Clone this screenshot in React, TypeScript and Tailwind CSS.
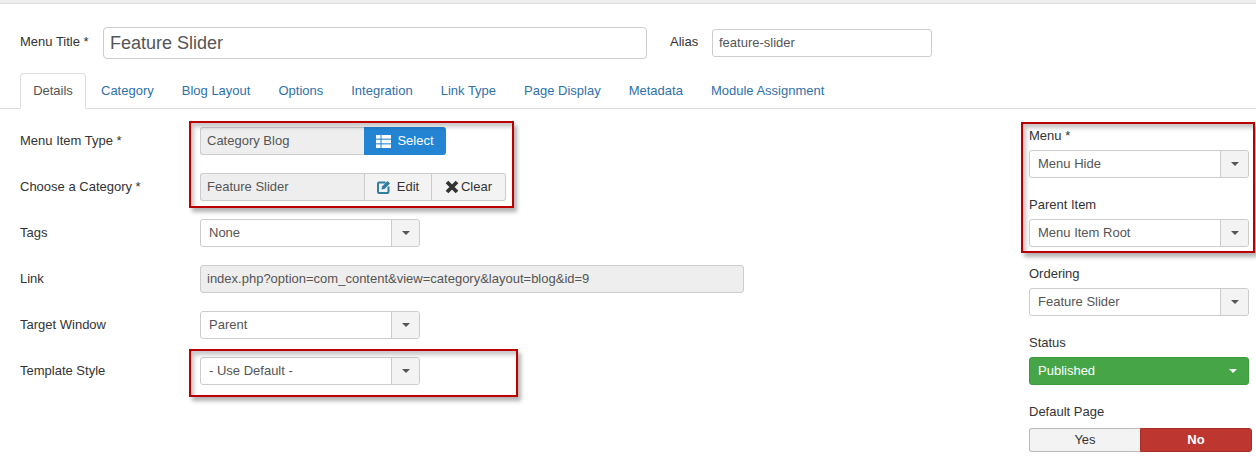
import { ReactNode } from "react";

const tabs = ["Category", "Blog Layout", "Options", "Integration", "Link Type", "Page Display", "Metadata", "Module Assignment"];

function Caret({ className = "border-t-[#555]" }: { className?: string }) {
  return <span className={`h-0 w-0 border-x-[4px] border-t-[4px] border-x-transparent ${className}`} />;
}

function Select({ value, width = "w-[220px]" }: { value: string; width?: string }) {
  return (
    <div className={`flex h-7 ${width} items-stretch rounded-[3px] border border-[#ccc] bg-white text-[#555]`}>
      <span className="flex flex-1 items-center pl-2">{value}</span>
      <span className="flex w-7 items-center justify-center rounded-r-[3px] border-l border-[#ccc] bg-[#f3f3f3]">
        <Caret />
      </span>
    </div>
  );
}

function Row({ label, children }: { label: string; children: ReactNode }) {
  return (
    <div className="flex h-7 items-center">
      <label className="w-[180px] text-[#333]">{label}</label>
      {children}
    </div>
  );
}

function SideField({ label, children }: { label: string; children: ReactNode }) {
  return (
    <div className="flex flex-col">
      <label className="mb-[7px] h-[15px] leading-[15px] text-[#333]">{label}</label>
      {children}
    </div>
  );
}

function TableIcon() {
  return (
    <svg width="15" height="13" viewBox="0 0 15 13" fill="white">
      <rect x="0" y="0" width="4.5" height="3.6" />
      <rect x="5.5" y="0" width="9.5" height="3.6" />
      <rect x="0" y="4.7" width="4.5" height="3.6" />
      <rect x="5.5" y="4.7" width="9.5" height="3.6" />
      <rect x="0" y="9.4" width="4.5" height="3.6" />
      <rect x="5.5" y="9.4" width="9.5" height="3.6" />
    </svg>
  );
}

function EditIcon() {
  return (
    <svg width="14" height="14" viewBox="0 0 14 14" fill="none">
      <path d="M8.5 2.5H2a1 1 0 0 0-1 1V12a1 1 0 0 0 1 1h8.5a1 1 0 0 0 1-1V6.5" stroke="#2f7d9f" strokeWidth="2" />
      <path d="M4.5 9.5 5 6.5 10.5 1 13 3.5 7.5 9Z" fill="#2f7d9f" />
    </svg>
  );
}

function ClearIcon() {
  return (
    <svg width="14" height="14" viewBox="0 0 14 14" fill="none">
      <path d="M2 2 12 12M12 2 2 12" stroke="#333" strokeWidth="3.8" />
    </svg>
  );
}

function RedBox({ className }: { className: string }) {
  return <div className={`pointer-events-none absolute border-2 border-[#bb0000] shadow-[3px_4px_4px_rgba(0,0,0,0.3),inset_3px_4px_4px_rgba(0,0,0,0.22)] ${className}`} />;
}

export default function App() {
  return (
    <div className="relative h-[457px] w-[1256px] overflow-hidden bg-white font-['Liberation_Sans',Arial,sans-serif] text-[13px] text-[#333]">
      <div className="h-1 border-b border-[#ddd] bg-[#eee]" />

      <div className="flex items-center pl-5 pt-[23px]">
        <label className="-mt-[2px] w-[83px]">Menu Title *</label>
        <div className="flex h-8 w-[544px] items-center rounded-[4px] border border-[#ccc] px-[6px] text-[18px] text-[#555]">Feature Slider</div>
        <label className="-mt-[2px] ml-[23px] w-[42px]">Alias</label>
        <div className="flex h-7 w-[220px] items-center rounded-[3px] border border-[#ccc] px-[6px] text-[#555]">feature-slider</div>
      </div>

      <div className="mt-[14px] flex h-9 border-b border-[#ddd] pl-5">
        <div className="-mb-px flex h-9 w-[66px] items-center justify-center rounded-t-[4px] border border-[#ddd] border-b-white bg-white text-[#555]">Details</div>
        <div className="flex gap-7 pl-[15px]">
          {tabs.map((tab) => (
            <span key={tab} className="flex items-center text-[#3071a9]">{tab}</span>
          ))}
        </div>
      </div>

      <div className="flex justify-between pl-5 pr-[4px]">
        <div className="flex flex-col gap-[18px] pt-[18px]">
          <Row label="Menu Item Type *">
            <div className="flex h-7 w-[246px]">
              <span className="flex w-[164px] items-center rounded-l-[3px] border border-r-0 border-[#ccc] bg-[#eee] pl-[6px] text-[#555]">Category Blog</span>
              <span className="flex flex-1 items-center justify-center gap-[6px] rounded-r-[3px] bg-[#2384d3] text-white">
                <TableIcon />
                Select
              </span>
            </div>
          </Row>
          <Row label="Choose a Category *">
            <div className="flex h-7 w-[306px]">
              <span className="flex w-[164px] items-center rounded-l-[3px] border border-r-0 border-[#ccc] bg-[#eee] pl-[6px] text-[#555]">Feature Slider</span>
              <span className="flex w-[68px] items-center justify-center gap-[6px] border border-[#ccc] bg-[#f3f3f3]">
                <EditIcon />
                Edit
              </span>
              <span className="flex flex-1 items-center justify-center gap-[2px] rounded-r-[3px] border border-l-0 border-[#ccc] bg-[#f3f3f3]">
                <ClearIcon />
                Clear
              </span>
            </div>
          </Row>
          <Row label="Tags"><Select value="None" /></Row>
          <Row label="Link">
            <div className="flex h-7 w-[544px] items-center rounded-[3px] border border-[#ccc] bg-[#eee] px-[6px] text-[#555]">index.php?option=com_content&amp;view=category&amp;layout=blog&amp;id=9</div>
          </Row>
          <Row label="Target Window"><Select value="Parent" /></Row>
          <Row label="Template Style"><Select value="- Use Default -" /></Row>
        </div>

        <div className="flex flex-col gap-[19px] pt-[19px]">
          <SideField label="Menu *"><Select value="Menu Hide" /></SideField>
          <SideField label="Parent Item"><Select value="Menu Item Root" /></SideField>
          <SideField label="Ordering"><Select value="Feature Slider" /></SideField>
          <SideField label="Status">
            <div className="flex h-7 w-[220px] items-center justify-between rounded-[3px] border border-[#3c9a3f] bg-[#46a546] pl-2 pr-[11px] text-white">
              Published
              <Caret className="border-t-white" />
            </div>
          </SideField>
          <SideField label="Default Page">
            <div className="mt-[2px] flex h-6 w-[223px]">
              <span className="flex w-[111px] items-center justify-center rounded-l-[3px] border border-r-0 border-[#bbb] bg-[#f3f3f3]">Yes</span>
              <span className="flex flex-1 items-center justify-center rounded-r-[3px] border border-[#a82e28] bg-[#bd362f] font-bold text-white">No</span>
            </div>
          </SideField>
        </div>
      </div>

      <RedBox className="left-[189px] top-[121px] h-[87px] w-[325px]" />
      <RedBox className="left-[1021px] top-[122px] h-[131px] w-[234px]" />
      <RedBox className="left-[189px] top-[349px] h-[48px] w-[329px]" />
    </div>
  );
}
